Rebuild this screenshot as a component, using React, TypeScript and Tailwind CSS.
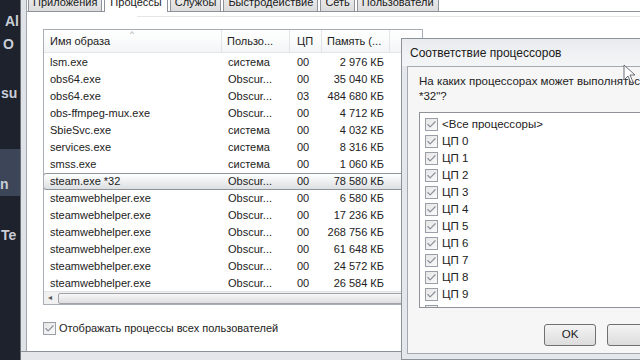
import { Check } from 'lucide-react';

const font = { fontFamily: '"Liberation Sans", Arial, sans-serif' };

interface Proc {
  name: string;
  user: string;
  cpu: string;
  mem: string;
  selected?: boolean;
}

const procs: Proc[] = [
  { name: 'lsm.exe', user: 'система', cpu: '00', mem: '2 976 КБ' },
  { name: 'obs64.exe', user: 'Obscur...', cpu: '00', mem: '35 040 КБ' },
  { name: 'obs64.exe', user: 'Obscur...', cpu: '03', mem: '484 680 КБ' },
  { name: 'obs-ffmpeg-mux.exe', user: 'Obscur...', cpu: '00', mem: '4 712 КБ' },
  { name: 'SbieSvc.exe', user: 'система', cpu: '00', mem: '4 032 КБ' },
  { name: 'services.exe', user: 'система', cpu: '00', mem: '8 316 КБ' },
  { name: 'smss.exe', user: 'система', cpu: '00', mem: '1 060 КБ' },
  { name: 'steam.exe *32', user: 'Obscur...', cpu: '00', mem: '78 580 КБ', selected: true },
  { name: 'steamwebhelper.exe', user: 'Obscur...', cpu: '00', mem: '6 580 КБ' },
  { name: 'steamwebhelper.exe', user: 'Obscur...', cpu: '00', mem: '17 236 КБ' },
  { name: 'steamwebhelper.exe', user: 'Obscur...', cpu: '00', mem: '268 756 КБ' },
  { name: 'steamwebhelper.exe', user: 'Obscur...', cpu: '00', mem: '61 648 КБ' },
  { name: 'steamwebhelper.exe', user: 'Obscur...', cpu: '00', mem: '24 572 КБ' },
  { name: 'steamwebhelper.exe', user: 'Obscur...', cpu: '00', mem: '26 584 КБ' },
];

const cpus = ['<Все процессоры>', 'ЦП 0', 'ЦП 1', 'ЦП 2', 'ЦП 3', 'ЦП 4', 'ЦП 5', 'ЦП 6', 'ЦП 7', 'ЦП 8', 'ЦП 9', 'ЦП 10'];

const tabs = ['Приложения', 'Процессы', 'Службы', 'Быстродействие', 'Сеть', 'Пользователи'];

const CheckBox = () => (
  <div className="w-[13px] h-[13px] shrink-0 border border-[#9a9ea6] bg-gradient-to-br from-[#e6e6e6] to-[#fafafa] flex items-center justify-center">
    <Check size={11} strokeWidth={2.5} className="text-[#8a8e96]" />
  </div>
);

const Sidebar = () => (
  <div className="w-[20px] shrink-0 flex flex-col bg-[#1e222c] text-[#c9ced8] font-bold text-[14px] leading-none overflow-hidden">
    <div className="mt-[14px] pl-[5px]">Al</div>
    <div className="mt-[9px] pl-[3px]">O</div>
    <div className="mt-[35px] pl-[1px]">su</div>
    <div className="mt-[49px] h-[47px] bg-[#3c4658] flex items-end pb-[5px]">n</div>
    <div className="mt-[32px] pl-[1px]">Te</div>
  </div>
);

const Tabs = () => (
  <div className="h-[12px] flex items-end pl-[1px] gap-[2px] border-b border-[#8e939b] relative">
    {tabs.map((t) =>
      t === 'Процессы' ? (
        <div
          key={t}
          className="h-[22px] -mb-px px-[5px] bg-white border border-b-0 border-[#8e939b] flex items-start text-[11px] text-[#1a1a1a] relative z-10"
        >
          <span className="mt-[3px]">{t}</span>
        </div>
      ) : (
        <div
          key={t}
          className="h-[20px] px-[4px] bg-gradient-to-b from-[#f2f2f2] to-[#dcdcdc] border border-b-0 border-[#8e939b] flex items-start text-[11px] text-[#1a1a1a]"
        >
          <span className="mt-[2px]">{t}</span>
        </div>
      )
    )}
  </div>
);

const ProcList = () => (
  <div className="ml-[16px] mt-[12px] w-[380px] h-[276px] border border-[#a9adb4] bg-white flex flex-col text-[11px] text-[#222]">
    <div className="h-[23px] flex border-b border-[#e3e5e8] bg-gradient-to-b from-white to-[#f4f5f6] relative">
      <div className="w-[178px] pl-[6px] flex items-center border-r border-[#e3e5e8]">Имя образа</div>
      <span className="absolute left-[86px] top-[-2px] text-[8px] text-[#8f959c]">^</span>
      <div className="w-[68px] pl-[5px] flex items-center border-r border-[#e3e5e8]">Пользо...</div>
      <div className="w-[32px] pl-[7px] flex items-center border-r border-[#e3e5e8]">ЦП</div>
      <div className="w-[68px] pl-[5px] flex items-center border-r border-[#e3e5e8]">Память (...</div>
    </div>
    <div className="flex-1 flex flex-col pt-px overflow-hidden">
      {procs.map((p, i) => (
        <div
          key={i}
          className={
            'h-[17px] shrink-0 flex items-center ' +
            (p.selected
              ? 'border border-[#8f9499] rounded-[3px] bg-gradient-to-b from-white to-[#dcdfe2] -ml-px'
              : '')
          }
        >
          <div className="w-[178px] pl-[6px] whitespace-nowrap">{p.name}</div>
          <div className="w-[68px] pl-[6px] whitespace-nowrap">{p.user}</div>
          <div className="w-[32px] pl-[7px]">{p.cpu}</div>
          <div className="w-[68px] pr-[6px] text-right whitespace-nowrap">{p.mem}</div>
        </div>
      ))}
    </div>
    <div className="h-[13px] flex items-center border-t border-[#e2e3e5] bg-[#f0f0f0] shrink-0">
      <div className="w-[14px] text-[8px] text-[#555] pl-[4px]">◂</div>
      <div className="flex-1 h-[11px] border border-[#a0a3a8] rounded-[2px] bg-gradient-to-b from-[#f7f7f7] to-[#dedede]" />
    </div>
  </div>
);

const TaskManager = () => (
  <div className="flex-1 flex flex-col bg-[#dfe2e6] border-l border-[#6b7079]">
    <div className="flex-1 ml-[5px] flex flex-col bg-white border-l border-[#a3a7ad]">
      <Tabs />
      <div className="h-[4px]" />
      <div className="h-px bg-[#e6e6e6] ml-[110px]" />
      <ProcList />
      <div className="ml-[16px] mt-[15px] flex items-center gap-[3px] text-[11px] text-[#222]">
        <CheckBox />
        <span>Отображать процессы всех пользователей</span>
      </div>
      <div className="flex-1" />
    </div>
    <div className="h-[9px] border-t border-[#8d9299] bg-[#e4e6e9]" />
  </div>
);

const Dialog = () => (
  <div className="absolute left-[401px] top-[38px] w-[260px] h-[322px] border border-[#8d9299] bg-[#e4e7eb] flex flex-col">
    <div className="h-[27px] flex items-center pl-[8px] text-[12px] text-[#1a1a1a] bg-gradient-to-b from-[#e9ecef] to-[#f4f5f6]">
      Соответствие процессоров
    </div>
    <div className="ml-[5px] flex-1 mb-[5px] bg-[#f6f6f6] border border-[#a5a9af] flex flex-col text-[11.5px] text-[#222]">
      <div className="pl-[11px] pt-[7px] leading-[15px] whitespace-nowrap">
        <div>На каких процессорах может выполняться "steam.exe</div>
        <div>*32"?</div>
      </div>
      <div className="ml-[11px] mt-[8px] h-[196px] border border-[#8f9399] bg-white flex flex-col pt-[3px] pl-[5px] overflow-hidden shrink-0">
        {cpus.map((c) => (
          <div key={c} className="h-[17px] shrink-0 flex items-center gap-[4px]">
            <CheckBox />
            <span>{c}</span>
          </div>
        ))}
      </div>
      <div className="flex gap-[11px] pl-[136px] mt-[16px]">
        <div className="w-[74px] h-[22px] rounded-[3px] border border-[#707070] bg-gradient-to-b from-[#f4f4f4] to-[#dcdcdc] flex items-center justify-center">
          OK
        </div>
        <div className="w-[74px] h-[22px] rounded-[3px] border border-[#707070] bg-gradient-to-b from-[#f4f4f4] to-[#dcdcdc]" />
      </div>
    </div>
  </div>
);

const Cursor = () => (
  <svg className="absolute left-[623px] top-[64px]" width="14" height="20" viewBox="0 0 14 20">
    <path d="M1 1 L1 16 L5 12 L8 19 L10 18 L7 11 L12 11 Z" fill="#ffffff" stroke="#6b6f75" strokeWidth="1" />
  </svg>
);

export default function App() {
  return (
    <div className="w-[640px] h-[360px] relative overflow-hidden flex bg-[#1e222c]" style={font}>
      <Sidebar />
      <TaskManager />
      <Dialog />
      <Cursor />
    </div>
  );
}
